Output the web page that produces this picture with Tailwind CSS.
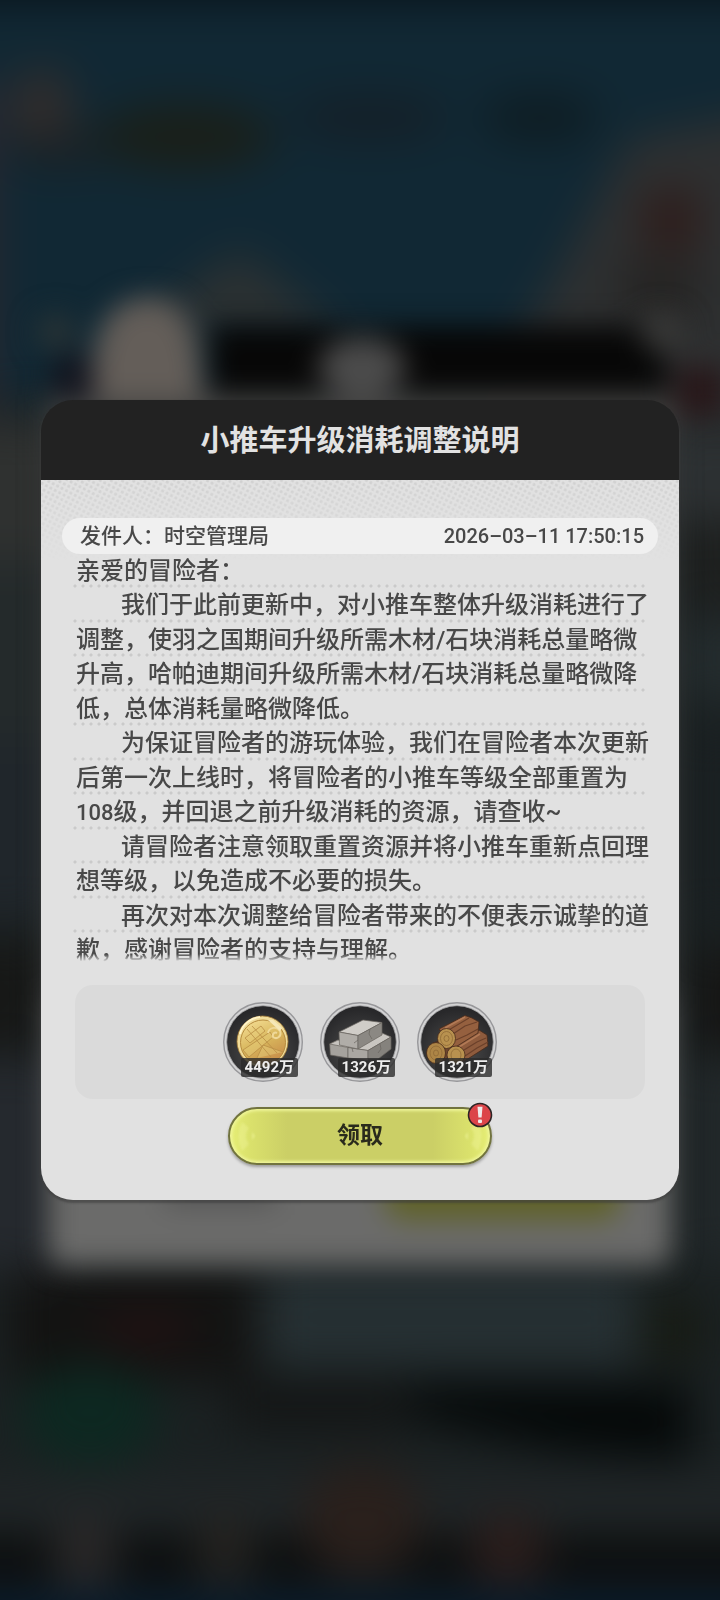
<!DOCTYPE html>
<html lang="zh-CN">
<head>
    <meta charset="UTF-8">
    <meta name="viewport" content="width=device-width, initial-scale=1.0">
    <title>小推车升级消耗调整说明</title>
    <script src="https://cdn.jsdelivr.net/npm/@tailwindcss/browser@4"></script>
</head>
<body class="bg-[#1a1f21] font-[Roboto,'Noto_Sans_CJK_SC',sans-serif] text-[#484848]">
    <!-- Blurred game scene behind the dialog -->
    <svg class="fixed inset-0 -z-10 size-full" viewBox="0 0 720 1600" preserveAspectRatio="none" aria-hidden="true">
        <defs>
            <filter id="blur" x="-10%" y="-10%" width="120%" height="120%" color-interpolation-filters="sRGB"><feGaussianBlur stdDeviation="22" /></filter>
            <filter id="soft" x="-20%" y="-20%" width="140%" height="140%" color-interpolation-filters="sRGB"><feGaussianBlur stdDeviation="14" /></filter>
        </defs>
        <rect width="720" height="1600" fill="#1b2122" />
        <g filter="url(#blur)">
            <rect x="-60" y="-60" width="840" height="460" fill="#112834" />
            <rect x="-60" y="-60" width="840" height="62" fill="#08131a" />
            <rect x="-60" y="80" width="56" height="330" fill="#2a2730" />
            <ellipse cx="42" cy="110" rx="32" ry="42" fill="#322d2c" />
            <ellipse cx="60" cy="150" rx="50" ry="16" fill="#1b2023" />
            <ellipse cx="185" cy="137" rx="90" ry="32" fill="#1a1f18" />
            <ellipse cx="370" cy="118" rx="80" ry="22" fill="#141f27" />
            <ellipse cx="540" cy="118" rx="60" ry="24" fill="#0e1c22" />
            <path d="M630 140L780 110V420H470L560 270Z" fill="#2e3031" />
            <rect x="642" y="190" width="58" height="60" fill="#2e1d1b" />
            <rect x="620" y="260" width="80" height="60" fill="#252423" />
            <path d="M130 330L240 250L350 340Z" fill="#2c3132" />
            <rect x="-60" y="420" width="120" height="150" fill="#2f3130" />
            <rect x="-60" y="560" width="120" height="180" fill="#242a2b" />
            <rect x="-60" y="740" width="120" height="180" fill="#20262b" />
            <rect x="-60" y="940" width="110" height="110" fill="#171817" />
            <rect x="-60" y="1060" width="130" height="210" fill="#25292e" />
            <rect x="660" y="430" width="120" height="90" fill="#2d3133" />
            <rect x="680" y="520" width="100" height="90" fill="#1e201f" />
            <rect x="680" y="620" width="100" height="80" fill="#242c2e" />
            <rect x="680" y="730" width="100" height="190" fill="#1a2022" />
            <rect x="690" y="950" width="100" height="100" fill="#161615" />
            <rect x="690" y="1060" width="100" height="200" fill="#22282a" />
            <rect x="10" y="1270" width="245" height="110" fill="#131312" />
            <ellipse cx="145" cy="1330" rx="50" ry="18" fill="#221112" />
            <rect x="265" y="1270" width="370" height="95" fill="#263033" />
            <rect x="645" y="1300" width="55" height="60" fill="#161a12" />
            <ellipse cx="90" cy="1415" rx="70" ry="50" fill="#0d2821" />
            <path d="M400 1385H690V1460L560 1450L420 1420Z" fill="#050909" />
            <rect x="230" y="1380" width="180" height="50" fill="#141616" />
            <rect x="-60" y="1475" width="840" height="50" fill="#202527" />
            <rect x="-60" y="1540" width="840" height="40" fill="#0a0b0b" />
            <ellipse cx="362" cy="1520" rx="60" ry="56" fill="#2a201c" />
            <ellipse cx="85" cy="1555" rx="30" ry="40" fill="#2b2929" />
            <ellipse cx="225" cy="1550" rx="28" ry="40" fill="#252320" />
            <ellipse cx="508" cy="1550" rx="38" ry="36" fill="#2b1d1b" />
            <rect x="-60" y="1592" width="840" height="70" fill="#071a2b" />
        </g>
        <g filter="url(#soft)">
            <rect x="48" y="395" width="624" height="871" rx="16" fill="#6b6b6a" />
            <rect x="48" y="395" width="624" height="600" fill="#434342" />
            <rect x="212" y="326" width="454" height="68" fill="#070707" />
            <ellipse cx="76" cy="378" rx="26" ry="24" fill="#13151f" />
            <path d="M96 400C84 330 112 298 148 298C186 298 202 330 202 400Z" fill="#645e59" />
            <ellipse cx="362" cy="367" rx="44" ry="30" fill="#4b4b4b" />
            <ellipse cx="662" cy="333" rx="22" ry="20" fill="#383837" />
            <ellipse cx="56" cy="332" rx="20" ry="18" fill="#293335" />
            <rect x="675" y="366" width="50" height="50" fill="#28181a" />
            <rect x="385" y="1140" width="235" height="80" rx="20" fill="#606228" />
            <rect x="165" y="1160" width="110" height="46" fill="#565656" />
        </g>
    </svg>

    <main class="flex min-h-screen items-center px-[41px]">
        <section role="dialog" aria-labelledby="title" class="w-full rounded-[32px] shadow-[0_2px_2px_1px_rgba(60,60,60,0.6)]">
            <header class="flex h-20 items-center justify-center rounded-t-[32px] bg-[#222222]">
                <h1 id="title" class="pt-0.5 text-[29px] leading-10 font-bold text-[#e2e2e2]">小推车升级消耗调整说明</h1>
            </header>

            <div class="relative isolate rounded-b-[32px] bg-[#e1e1e1] pt-[38px] pb-[35px]">
                <!-- Halftone under the header -->
                <svg class="absolute inset-x-0 top-0 -z-10 h-20 w-full" aria-hidden="true">
                    <defs>
                        <pattern id="dots" width="5" height="5" patternUnits="userSpaceOnUse" patternTransform="rotate(28)">
                            <circle cx="2.5" cy="2.5" r="1.5" fill="#d0d0d0" />
                        </pattern>
                        <linearGradient id="fade" x2="0" y2="1">
                            <stop stop-color="#fff" />
                            <stop offset="1" stop-color="#000" />
                        </linearGradient>
                        <mask id="fadeMask"><rect width="100%" height="100%" fill="url(#fade)" /></mask>
                    </defs>
                    <rect width="100%" height="100%" fill="url(#dots)" mask="url(#fadeMask)" />
                </svg>

                <div class="mx-[21px] flex h-9 items-center justify-between rounded-full bg-[#f0f0f0] pr-[14px] pl-[18px] text-[21px] leading-[34px] font-medium">
                    <span>发件人：时空管理局</span>
                    <time datetime="2026-03-11T17:50:15" class="text-[20px]">2026–03–11 17:50:15</time>
                </div>

                <div class="mx-[30px] text-[24px] font-medium whitespace-nowrap [mask-image:linear-gradient(#000_calc(100%-14px),transparent_calc(100%-6px))] *:bg-[radial-gradient(circle,#cacaca_1px,transparent_2px)] *:bg-[length:8px_4px] *:bg-bottom-left *:bg-repeat-x *:pl-[5px] *:odd:leading-[34px] *:even:leading-[35px] *:last:bg-none">
                    <p>亲爱的冒险者：</p>
                    <p><span class="pl-[45px]">我们于此前更新中，对小推车整体升级消耗进行了</span></p>
                    <p>调整，使羽之国期间升级所需木材/石块消耗总量略微</p>
                    <p>升高，哈帕迪期间升级所需木材/石块消耗总量略微降</p>
                    <p>低，总体消耗量略微降低。</p>
                    <p><span class="pl-[45px]">为保证冒险者的游玩体验，我们在冒险者本次更新</span></p>
                    <p>后第一次上线时，将冒险者的小推车等级全部重置为</p>
                    <p><span class="text-[22px]">108</span>级，并回退之前升级消耗的资源，请查收~</p>
                    <p><span class="pl-[45px]">请冒险者注意领取重置资源并将小推车重新点回理</span></p>
                    <p>想等级，以免造成不必要的损失。</p>
                    <p><span class="pl-[45px]">再次对本次调整给冒险者带来的不便表示诚挚的道</span></p>
                    <p>歉，感谢冒险者的支持与理解。</p>
                </div>

                <ul class="mx-[34px] mt-[17px] flex h-[114px] items-center justify-center gap-[17px] rounded-[18px] bg-[#dadada]">
                    <li class="relative size-20">
                        <svg class="size-20" viewBox="0 0 80 80" aria-hidden="true">
                            <defs>
                                <radialGradient id="plate" cx=".5" cy=".65" r=".6">
                                    <stop stop-color="#505050" />
                                    <stop offset="1" stop-color="#28282a" />
                                </radialGradient>
                                <linearGradient id="gold" x1=".2" y1="0" x2=".7" y2="1">
                                    <stop stop-color="#f3dc92" />
                                    <stop offset=".5" stop-color="#d8b65c" />
                                    <stop offset="1" stop-color="#c68a48" />
                                </linearGradient>
                            </defs>
                            <circle cx="40" cy="40" r="39.3" fill="#d3d3d4" stroke="#97979a" stroke-width="1.4" />
                            <circle cx="40" cy="40" r="36.3" fill="url(#plate)" stroke="#a4a4a6" stroke-width=".8" />
                            <circle cx="39.5" cy="39.5" r="25.5" fill="#f0dc9a" stroke="#a47b35" stroke-width=".8" />
                            <circle cx="40" cy="40.5" r="22.5" fill="url(#gold)" stroke="#b68b3d" />
                            <path d="M22 36L38 24L42 29L27 41ZM20 48L47 30L50 35L26 55ZM24 27L48 55M29 24L54 51M34 56L40 43L60 50" fill="#e6cb79" fill-opacity=".5" stroke="#b98e45" stroke-width=".8" />
                            <path d="M45 31C46 25 54 24 57 29C59 34 54 38 50 35C49 31 52 30 54 31" fill="none" stroke="#efd898" stroke-width="2" />
                            <path d="M17 32C19 23 27 16 37 15" fill="none" stroke="#fff4c8" stroke-width="2" />
                            <path d="M50 18L59 26L57 29L45 18Z" fill="#f6e8b8" />
                        </svg>
                        <span class="absolute right-[5px] bottom-[5px] rounded-[2px] bg-[#2b2b2b]/80 px-1 text-[15px] leading-[19px] font-bold text-[#eeeeee]">4492万</span>
                    </li>
                    <li class="relative size-20">
                        <svg class="size-20" viewBox="0 0 80 80" aria-hidden="true">
                            <circle cx="40" cy="40" r="39.3" fill="#d3d3d4" stroke="#97979a" stroke-width="1.4" />
                            <circle cx="40" cy="40" r="36.3" fill="url(#plate)" stroke="#a4a4a6" stroke-width=".8" />
                            <g stroke="#68645f" stroke-width=".7" stroke-linejoin="round">
                                <path d="M9.7 42L18 38L28 44V56L10.3 53Z" fill="#a5a29d" />
                                <path d="M9.7 42L18 38L34 43L28 45.5Z" fill="#c7c4bf" />
                                <path d="M28 45.5L38 41L62 31L71 35L48 48.5Z" fill="#c9c6c1" />
                                <path d="M28 45.5L48 48.5V58L28 56Z" fill="#aaa7a2" />
                                <path d="M48 48.5L71 35V47L58 57H48Z" fill="#85827d" />
                                <path d="M19 30L43 18L62 20.5L38 33.5Z" fill="#d0cdc8" />
                                <path d="M19 30L38 33.5V47L19.5 43Z" fill="#b0ada8" />
                                <path d="M38 33.5L62 20.5V33L38 47Z" fill="#8b8883" />
                                <path d="M50 27L49 32L52 37M38 38L34 41M60 42L61 47L58 51M32 46L33 50" fill="none" />
                            </g>
                        </svg>
                        <span class="absolute right-[5px] bottom-[5px] rounded-[2px] bg-[#2b2b2b]/80 px-1 text-[15px] leading-[19px] font-bold text-[#eeeeee]">1326万</span>
                    </li>
                    <li class="relative size-20">
                        <svg class="size-20" viewBox="0 0 80 80" aria-hidden="true">
                            <circle cx="40" cy="40" r="39.3" fill="#d3d3d4" stroke="#97979a" stroke-width="1.4" />
                            <circle cx="40" cy="40" r="36.3" fill="url(#plate)" stroke="#a4a4a6" stroke-width=".8" />
                            <g stroke="#46291b" stroke-width=".8" stroke-linejoin="round">
                                <path d="M16 41L30 36L40 48L26 60Z" fill="#6d452e" />
                                <path d="M32 44L62 28L70 33L71 44L46 60Z" fill="#8e5b3d" />
                                <path d="M22 27L48 13.5L55 16L62 20L61 31L37 46Z" fill="#95603f" />
                                <path d="M30 29L52 16M36 32L48 24L60 20M39 38L50 33L61 27M47 48L60 40L69 36M48 54L60 46L71 40" fill="none" stroke="#6b402a" stroke-width="1.2" />
                                <path d="M28 26L48 15M42 45L63 32" fill="none" stroke="#b27a56" stroke-width="1.5" />
                                <ellipse cx="29.5" cy="36.5" rx="9" ry="10" fill="#b8914f" />
                                <ellipse cx="19" cy="51" rx="9.5" ry="10.5" fill="#ad8546" />
                                <ellipse cx="39" cy="53" rx="9" ry="9" fill="#b8914f" />
                                <g fill="none" stroke="#8f6a36" stroke-width=".8">
                                    <ellipse cx="29.5" cy="36.5" rx="6" ry="7" />
                                    <ellipse cx="29.5" cy="36.5" rx="2.5" ry="3" />
                                    <ellipse cx="19" cy="51" rx="6" ry="7" />
                                    <ellipse cx="19" cy="51" rx="2.5" ry="3" />
                                    <ellipse cx="39" cy="53" rx="5" ry="6" />
                                </g>
                            </g>
                        </svg>
                        <span class="absolute right-[5px] bottom-[5px] rounded-[2px] bg-[#2b2b2b]/80 px-1 text-[15px] leading-[19px] font-bold text-[#eeeeee]">1321万</span>
                    </li>
                </ul>

                <div class="mt-2 flex justify-center">
                    <button type="button" class="relative isolate h-[58px] w-[264px] rounded-full border-2 border-[#71733f] bg-[linear-gradient(90deg,#e6ee76_0,#dbe26c_7%,#cbcf66_22%,#cbcf66_78%,#dbe26c_93%,#e6ee76_100%)] text-[23px] font-bold text-[#2a2a1c] shadow-[inset_0_0_3px_2px_#eff59a,0_2px_3px_rgba(0,0,0,0.3)]">
                        <svg class="absolute inset-y-0 left-0 -z-10 h-full w-8 blur-[1px]" viewBox="0 0 32 54" aria-hidden="true">
                            <path d="M12 13L19 19C15 24 15 30 19 35L12 42Q5 27 12 13Z" fill="#f0f59c" fill-opacity=".4" />
                            <path d="M22 23L25 27L22 31Z" fill="#f0f59c" fill-opacity=".6" />
                        </svg>
                        领取
                        <svg class="absolute inset-y-0 right-0 -z-10 h-full w-8 -scale-x-100 blur-[1px]" viewBox="0 0 32 54" aria-hidden="true">
                            <path d="M12 13L19 19C15 24 15 30 19 35L12 42Q5 27 12 13Z" fill="#f0f59c" fill-opacity=".4" />
                            <path d="M22 23L25 27L22 31Z" fill="#f0f59c" fill-opacity=".6" />
                        </svg>
                        <svg class="absolute -top-[7px] -right-[3px] size-[26px]" viewBox="0 0 26 26" aria-hidden="true">
                            <circle cx="13" cy="13" r="11.5" fill="#dc4549" stroke="#2c2425" stroke-width="1.6" />
                            <path d="M10.5 4.8H15.5L14.6 15.5H11.4Z" fill="#f0eaea" />
                            <rect x="11" y="17.5" width="4" height="3.4" rx="1" fill="#f0eaea" />
                        </svg>
                    </button>
                </div>
            </div>
        </section>
    </main>
</body>
</html>
